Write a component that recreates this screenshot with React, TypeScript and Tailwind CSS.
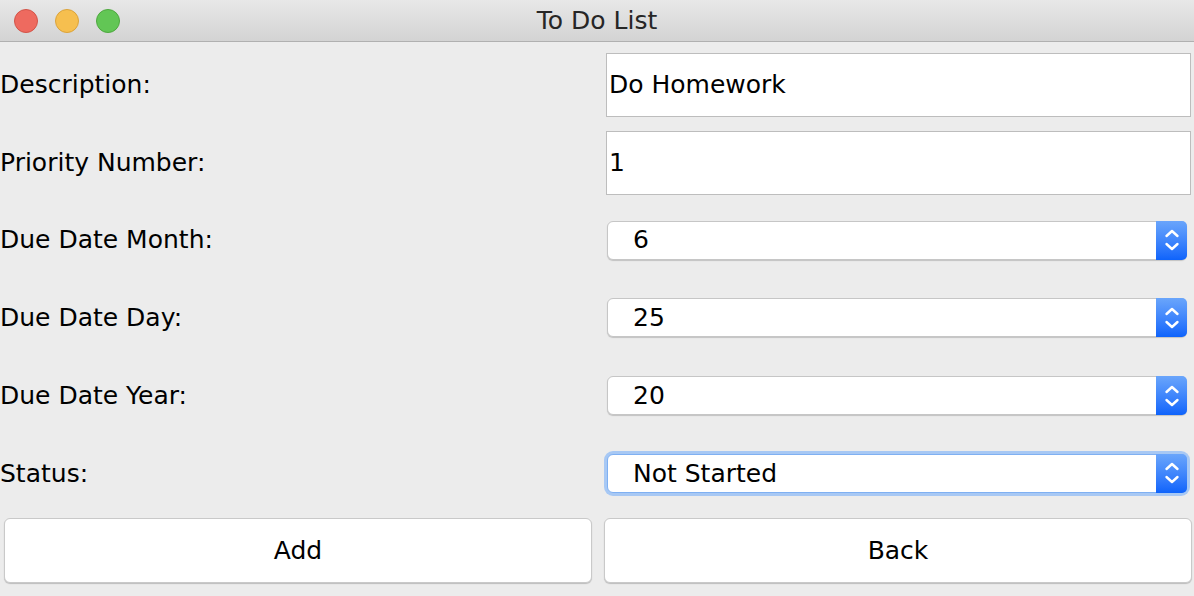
import React from "react";

const font = { fontFamily: '"DejaVu Sans", "Liberation Sans", sans-serif' };

const Stepper = () => (
  <div className="w-[31px] self-stretch -my-px -mr-px rounded-r-[5px] bg-gradient-to-b from-[#6aa5fb] to-[#0d63fb] flex items-center justify-center">
    <svg width="16" height="26" viewBox="0 0 16 26" fill="none" stroke="white" strokeWidth="2.4" strokeLinecap="round" strokeLinejoin="round">
      <path d="M2.5 9 L8 4 L13.5 9" />
      <path d="M2.5 17 L8 22 L13.5 17" />
    </svg>
  </div>
);

const Field = ({ value }: { value: string }) => (
  <div className="ml-[8px] mr-[3px] h-[64px] w-full bg-white border border-[#bdbdbd] flex items-center pl-[2px] text-[25px] text-black">
    {value}
  </div>
);

const Combo = ({ value, focused }: { value: string; focused?: boolean }) => (
  <div
    className={
      focused
        ? "ml-[9px] mr-[7px] h-[39px] w-full bg-white rounded-[6px] border border-[#7fb0f2] ring-[3px] ring-[#a7c8f4] flex items-center"
        : "ml-[9px] mr-[7px] h-[39px] w-full bg-white rounded-[6px] border border-[#c6c6c6] shadow-[0_1px_1px_rgba(0,0,0,0.18)] flex items-center"
    }
  >
    <span className="flex-1 pl-[25px] text-[25px] text-black">{value}</span>
    <Stepper />
  </div>
);

const rows: { label: string; control: React.ReactNode }[] = [
  { label: "Description:", control: <Field value="Do Homework" /> },
  { label: "Priority Number:", control: <Field value="1" /> },
  { label: "Due Date Month:", control: <Combo value="6" /> },
  { label: "Due Date Day:", control: <Combo value="25" /> },
  { label: "Due Date Year:", control: <Combo value="20" /> },
  { label: "Status:", control: <Combo value="Not Started" focused /> },
];

export default function App() {
  return (
    <div className="w-[1194px] h-[596px] bg-[#ececec] overflow-hidden flex flex-col" style={font}>
      <header className="h-[42px] shrink-0 bg-gradient-to-b from-[#e8e8e8] to-[#d3d3d3] border-b border-[#b0b0b0] flex items-center relative">
        <div className="flex items-center gap-[17px] pl-[14px]">
          <span className="w-[24px] h-[24px] rounded-full bg-[#ee6a5f] border border-[#d25448]" />
          <span className="w-[24px] h-[24px] rounded-full bg-[#f6bf4f] border border-[#dba33a]" />
          <span className="w-[24px] h-[24px] rounded-full bg-[#62c655] border border-[#4ea83f]" />
        </div>
        <div className="absolute inset-0 flex items-center justify-center text-[25px] text-[#262626] pointer-events-none">
          To Do List
        </div>
      </header>
      <main className="flex flex-col pt-[4px]">
        {rows.map((row) => (
          <div key={row.label} className="h-[77.7px] grid grid-cols-[598px_596px] items-center">
            <span className="text-[25px] text-black">{row.label}</span>
            <div className="flex items-center">{row.control}</div>
          </div>
        ))}
        <div className="h-[77.7px] flex items-center gap-[12px] px-[4px] pr-[2px]">
          <button className="flex-1 h-[65px] bg-white rounded-[6px] border border-[#c9c9c9] shadow-[0_1px_1px_rgba(0,0,0,0.2)] text-[25px] text-black">
            Add
          </button>
          <button className="flex-1 h-[65px] bg-white rounded-[6px] border border-[#c9c9c9] shadow-[0_1px_1px_rgba(0,0,0,0.2)] text-[25px] text-black">
            Back
          </button>
        </div>
      </main>
    </div>
  );
}
